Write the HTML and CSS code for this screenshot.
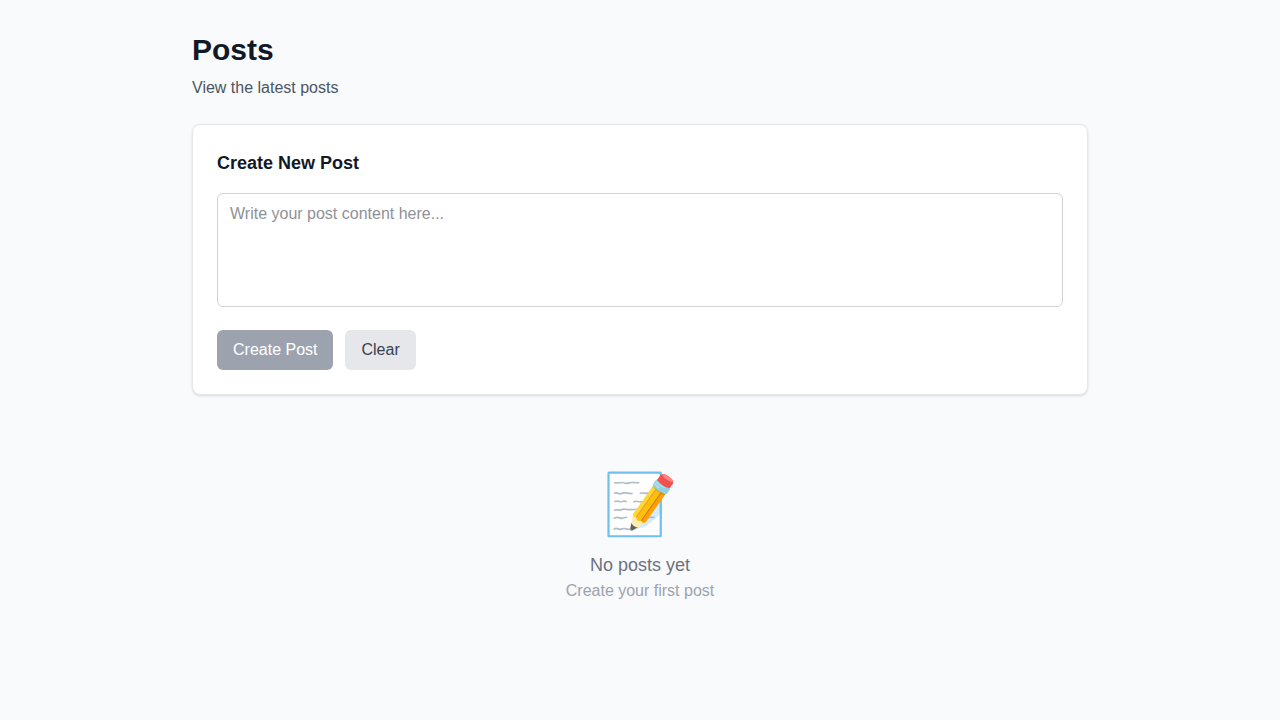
FILE: index.html
```html
<!DOCTYPE html>
<html lang="en">
<head>
<meta charset="utf-8">
<title>Posts</title>
<link rel="stylesheet" href="styles.css">
</head>
<body>
<main class="page">
  <header class="header">
    <h1 class="title">Posts</h1>
    <p class="subtitle">View the latest posts</p>
  </header>
  <section class="card">
    <h2 class="card-title">Create New Post</h2>
    <textarea class="input" rows="4" placeholder="Write your post content here..."></textarea>
    <div class="actions">
      <button class="btn btn-primary" disabled>Create Post</button>
      <button class="btn btn-secondary">Clear</button>
    </div>
  </section>
  <section class="empty">
    <div class="empty-icon">📝</div>
    <p class="empty-title">No posts yet</p>
    <p class="empty-text">Create your first post</p>
  </section>
</main>
</body>
</html>
```
FILE: styles.css
```css
*, *::before, *::after { box-sizing: border-box; }
body {
  margin: 0;
  min-height: 100vh;
  background: #f9fafb;
  font-family: "Liberation Sans", Arial, sans-serif;
  font-size: 16px;
  line-height: 24px;
}
h1, h2, p { margin: 0; }
.page { max-width: 896px; margin: 0 auto; padding: 32px 0; }
.header { margin-bottom: 24px; }
.title { margin-bottom: 8px; font-size: 30px; line-height: 36px; font-weight: 700; color: #111827; }
.subtitle { color: #4b5563; }
.card {
  margin-bottom: 16px;
  padding: 24px;
  background: #fff;
  border: 1px solid #e5e7eb;
  border-radius: 8px;
  box-shadow: 0 1px 3px rgba(0,0,0,.1), 0 1px 2px -1px rgba(0,0,0,.1);
}
.card-title { margin-bottom: 16px; font-size: 18px; line-height: 28px; font-weight: 600; color: #111827; }
.input {
  display: block;
  width: 100%;
  height: 114px;
  padding: 8px 12px;
  border: 1px solid #d1d5db;
  border-radius: 6px;
  background: #fff;
  color: #111827;
  font: inherit;
  resize: none;
}
.input::placeholder { color: #8f9197; }
.actions { display: flex; gap: 12px; margin-top: 23px; }
.btn { padding: 8px 16px; border: 0; border-radius: 6px; font: inherit; }
.btn-primary { background: #9ca3af; color: #fff; }
.btn-secondary { background: #e5e7eb; color: #374151; }
.empty { padding: 64px 0; text-align: center; }
.empty-icon { margin-bottom: 16px; font-size: 60px; line-height: 60px; }
.empty-title { font-size: 18px; line-height: 28px; color: #6b7280; }
.empty-text { color: #9ca3af; }
```
